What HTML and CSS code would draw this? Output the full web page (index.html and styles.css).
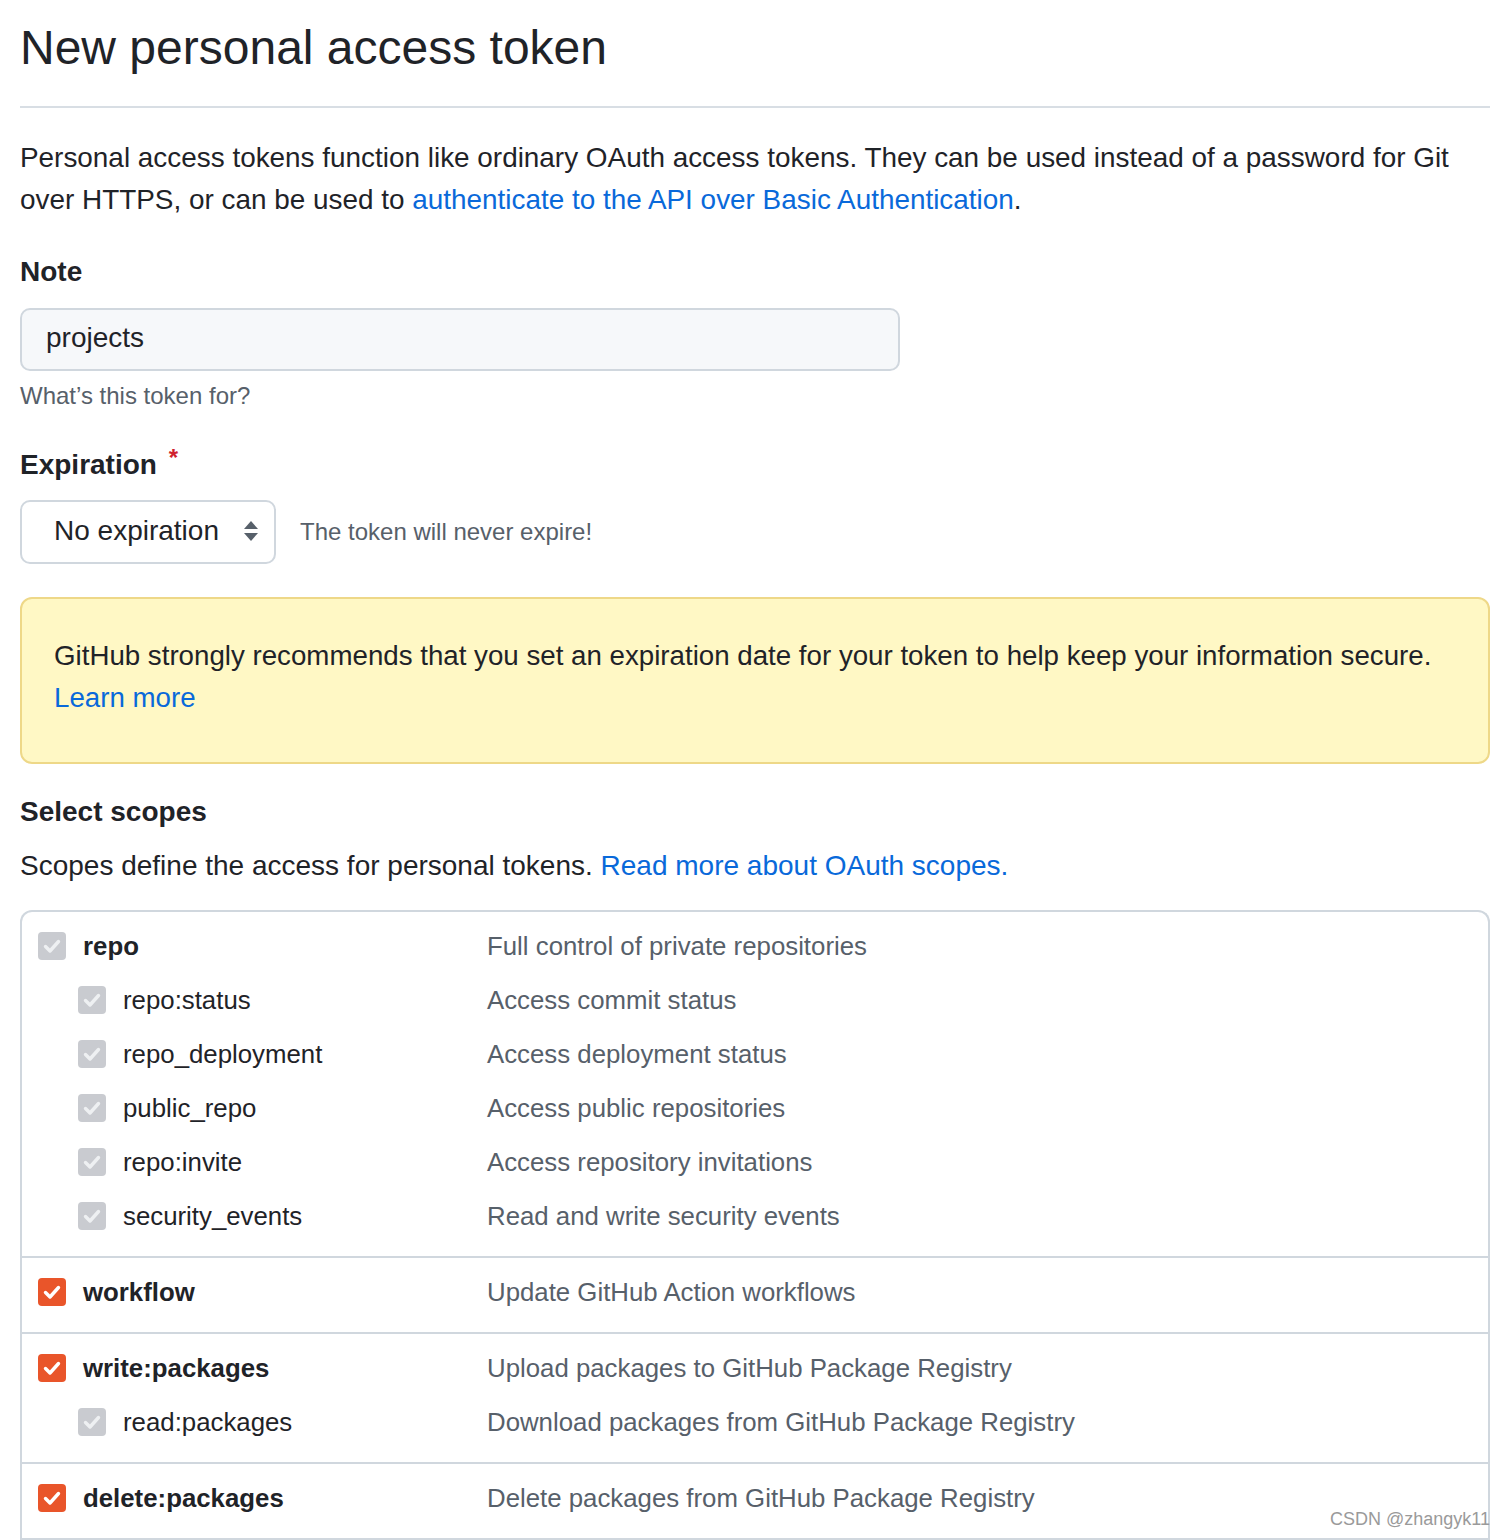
FILE: index.html
```html
<!DOCTYPE html>
<html lang="en">
<head>
  <meta charset="UTF-8">
  <meta name="viewport" content="width=device-width, initial-scale=1.0">
  <title>New personal access token</title>
  <link rel="stylesheet" href="styles.css">
</head>
<body>
  <div class="page">
    <h1 class="subhead">New personal access token</h1>

    <p class="intro">
      Personal access tokens function like ordinary OAuth access tokens. They can be used instead of a password for Git
      over HTTPS, or can be used to <a href="#">authenticate to the API over Basic Authentication</a>.
    </p>

    <form>
      <div class="form-group">
        <label class="form-label" for="note">Note</label>
        <input class="form-input" type="text" id="note" name="note" value="projects">
        <p class="note">What’s this token for?</p>
      </div>

      <div class="form-group expiration">
        <label class="form-label" for="expiration">Expiration <span class="required">*</span></label>
        <div class="expiration-row">
          <div class="select-wrap">
            <select class="form-select" id="expiration" name="expiration">
              <option>No expiration</option>
            </select>
            <svg class="select-arrow" width="16" height="22" viewBox="0 0 16 22">
              <path d="M8 1 L15 9 H1 Z" fill="#57606a"/>
              <path d="M8 21 L15 13 H1 Z" fill="#57606a"/>
            </svg>
          </div>
          <span class="expiration-note">The token will never expire!</span>
        </div>
      </div>

      <div class="flash-warn">
        GitHub strongly recommends that you set an expiration date for your token to help keep your information secure.
        <a href="#">Learn more</a>
      </div>

      <h3 class="section-title">Select scopes</h3>
      <p class="section-desc">Scopes define the access for personal tokens. <a href="#">Read more about OAuth scopes.</a></p>

      <div class="scopes">
        <div class="scope-group">
          <div class="scope-row">
            <span class="scope-name top"><span class="check"><svg viewBox="0 0 28 28"><path d="M7.5 14.5 L12 19 L20.5 9.5"/></svg></span>repo</span>
            <span class="scope-desc">Full control of private repositories</span>
          </div>
          <div class="scope-row child">
            <span class="scope-name"><span class="check"><svg viewBox="0 0 28 28"><path d="M7.5 14.5 L12 19 L20.5 9.5"/></svg></span>repo:status</span>
            <span class="scope-desc">Access commit status</span>
          </div>
          <div class="scope-row child">
            <span class="scope-name"><span class="check"><svg viewBox="0 0 28 28"><path d="M7.5 14.5 L12 19 L20.5 9.5"/></svg></span>repo_deployment</span>
            <span class="scope-desc">Access deployment status</span>
          </div>
          <div class="scope-row child">
            <span class="scope-name"><span class="check"><svg viewBox="0 0 28 28"><path d="M7.5 14.5 L12 19 L20.5 9.5"/></svg></span>public_repo</span>
            <span class="scope-desc">Access public repositories</span>
          </div>
          <div class="scope-row child">
            <span class="scope-name"><span class="check"><svg viewBox="0 0 28 28"><path d="M7.5 14.5 L12 19 L20.5 9.5"/></svg></span>repo:invite</span>
            <span class="scope-desc">Access repository invitations</span>
          </div>
          <div class="scope-row child">
            <span class="scope-name"><span class="check"><svg viewBox="0 0 28 28"><path d="M7.5 14.5 L12 19 L20.5 9.5"/></svg></span>security_events</span>
            <span class="scope-desc">Read and write security events</span>
          </div>
        </div>

        <div class="scope-group">
          <div class="scope-row">
            <span class="scope-name top"><span class="check on"><svg viewBox="0 0 28 28"><path d="M7.5 14.5 L12 19 L20.5 9.5"/></svg></span>workflow</span>
            <span class="scope-desc">Update GitHub Action workflows</span>
          </div>
        </div>

        <div class="scope-group">
          <div class="scope-row">
            <span class="scope-name top"><span class="check on"><svg viewBox="0 0 28 28"><path d="M7.5 14.5 L12 19 L20.5 9.5"/></svg></span>write:packages</span>
            <span class="scope-desc">Upload packages to GitHub Package Registry</span>
          </div>
          <div class="scope-row child">
            <span class="scope-name"><span class="check"><svg viewBox="0 0 28 28"><path d="M7.5 14.5 L12 19 L20.5 9.5"/></svg></span>read:packages</span>
            <span class="scope-desc">Download packages from GitHub Package Registry</span>
          </div>
        </div>

        <div class="scope-group">
          <div class="scope-row">
            <span class="scope-name top"><span class="check on"><svg viewBox="0 0 28 28"><path d="M7.5 14.5 L12 19 L20.5 9.5"/></svg></span>delete:packages</span>
            <span class="scope-desc">Delete packages from GitHub Package Registry</span>
          </div>
        </div>
      </div>
    </form>

    <div class="watermark">CSDN @zhangyk11</div>
  </div>
</body>
</html>
```

FILE: styles.css
```css
body {
  margin: 0;
  background: #fff;
  color: #1f2328;
  font-family: "Liberation Sans", Arial, Helvetica, sans-serif;
}
a {
  color: #0969da;
  text-decoration: none;
}
.page {
  position: relative;
  height: 1540px;
  overflow: hidden;
  padding: 0 18px 0 20px;
}
.subhead {
  margin: 0;
  padding: 18px 0 28px;
  font-size: 48px;
  font-weight: normal;
  line-height: 60px;
  border-bottom: 2px solid #d8dee4;
}
.intro {
  margin: 29px 0 0;
  font-size: 27.9px;
  line-height: 42px;
}
.form-group {
  margin-top: 30px;
}
.form-label {
  display: block;
  font-size: 28px;
  font-weight: bold;
  line-height: 42px;
  margin-bottom: 15px;
}
.required {
  color: #cf222e;
  font-size: 24px;
  vertical-align: 8px;
  margin-left: 4px;
}
.form-input {
  display: block;
  box-sizing: border-box;
  width: 880px;
  height: 63px;
  margin: 0;
  padding: 0 24px 3px;
  font-family: inherit;
  font-size: 28px;
  color: #1f2328;
  background: #f6f8fa;
  border: 2px solid #d0d7de;
  border-radius: 10px;
  outline: none;
}
.note {
  margin: 7px 0 0;
  font-size: 24px;
  line-height: 36px;
  color: #57606a;
}
.expiration {
  margin-top: 23px;
}
.expiration .form-label {
  margin-bottom: 14px;
}
.expiration-row {
  display: flex;
  align-items: center;
  gap: 24px;
}
.select-wrap {
  position: relative;
}
.form-select {
  appearance: none;
  -webkit-appearance: none;
  box-sizing: border-box;
  width: 256px;
  height: 64px;
  margin: 0;
  padding: 0 50px 4px 32px;
  font-family: inherit;
  font-size: 28px;
  color: #1f2328;
  background: #fff;
  border: 2px solid #d0d7de;
  border-radius: 10px;
  outline: none;
}
.select-arrow {
  position: absolute;
  right: 17px;
  top: 20px;
}
.expiration-note {
  font-size: 24px;
  color: #57606a;
}
.flash-warn {
  margin-top: 33px;
  padding: 36px 32px 43px;
  font-size: 27.7px;
  line-height: 42px;
  background: #fff8c5;
  border: 2px solid #eed888;
  border-radius: 12px;
}
.section-title {
  margin: 27px 0 0;
  font-size: 28px;
  line-height: 42px;
}
.section-desc {
  margin: 12px 0 0;
  font-size: 28px;
  line-height: 42px;
}
.scopes {
  margin-top: 23px;
  border: 2px solid #d0d7de;
  border-bottom: none;
  border-radius: 12px 12px 0 0;
}
.scope-group {
  padding: 7px 0 13px;
  border-bottom: 2px solid #d0d7de;
}
.scope-row {
  display: grid;
  grid-template-columns: 449px 1fr;
  align-items: center;
  height: 54px;
  padding-left: 16px;
  font-size: 25.8px;
}
.scope-name {
  display: flex;
  align-items: center;
  gap: 17px;
  color: #1f2328;
}
.scope-name.top {
  font-weight: bold;
}
.scope-row.child .scope-name {
  padding-left: 40px;
}
.scope-desc {
  color: #57606a;
}
.check {
  display: block;
  width: 28px;
  height: 28px;
  border-radius: 4px;
  background: #c9cbd0;
}
.check.on {
  background: #e9552a;
}
.check svg {
  display: block;
  width: 28px;
  height: 28px;
  fill: none;
  stroke: #fff;
  stroke-width: 3.4;
  stroke-linecap: round;
  stroke-linejoin: round;
}
.check:not(.on) svg {
  stroke: #eef0f2;
}
.watermark {
  position: absolute;
  right: 18px;
  bottom: 10px;
  font-size: 18px;
  color: #9a9a9a;
}
```
